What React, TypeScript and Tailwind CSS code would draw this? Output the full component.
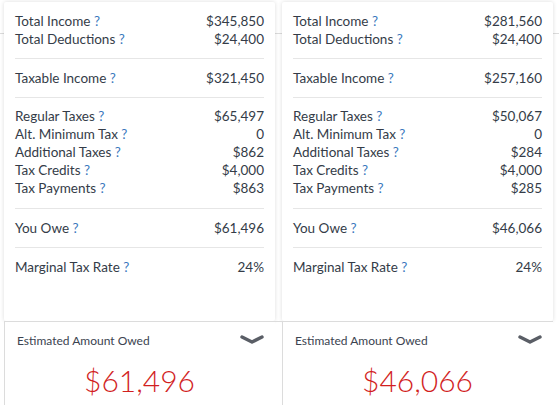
import React from "react";

// Tax comparison: two scenario cards side by side

interface Row {
  label: string;
  value: string;
}

interface Scenario {
  top: Row[];
  taxable: string;
  taxes: Row[];
  owe: string;
  rate: string;
}

const scenarios: Scenario[] = [
  {
    top: [
      { label: "Total Income", value: "$345,850" },
      { label: "Total Deductions", value: "$24,400" },
    ],
    taxable: "$321,450",
    taxes: [
      { label: "Regular Taxes", value: "$65,497" },
      { label: "Alt. Minimum Tax", value: "0" },
      { label: "Additional Taxes", value: "$862" },
      { label: "Tax Credits", value: "$4,000" },
      { label: "Tax Payments", value: "$863" },
    ],
    owe: "$61,496",
    rate: "24%",
  },
  {
    top: [
      { label: "Total Income", value: "$281,560" },
      { label: "Total Deductions", value: "$24,400" },
    ],
    taxable: "$257,160",
    taxes: [
      { label: "Regular Taxes", value: "$50,067" },
      { label: "Alt. Minimum Tax", value: "0" },
      { label: "Additional Taxes", value: "$284" },
      { label: "Tax Credits", value: "$4,000" },
      { label: "Tax Payments", value: "$285" },
    ],
    owe: "$46,066",
    rate: "24%",
  },
];

function Line({ label, value }: Row) {
  return (
    <div className="flex items-center justify-between h-[18px]">
      <span>
        {label} <span className="text-[#3a78bd]">?</span>
      </span>
      <span>{value}</span>
    </div>
  );
}

function Card({ s }: { s: Scenario }) {
  return (
    <div className="flex-1 flex flex-col">
      <div className="h-[319px] bg-white rounded-[2px] shadow-[0_0_4px_rgba(0,0,0,0.14)] px-[11px]">
        <div className="py-[10px] border-b border-[#e6e6e6]">
          {s.top.map((r) => (
            <Line key={r.label} {...r} />
          ))}
        </div>
        <div className="py-[10px] border-b border-[#e6e6e6]">
          <Line label="Taxable Income" value={s.taxable} />
        </div>
        <div className="pt-[9px] pb-[11px] border-b border-[#e6e6e6]">
          {s.taxes.map((r) => (
            <Line key={r.label} {...r} />
          ))}
        </div>
        <div className="py-[10px] border-b border-[#e6e6e6]">
          <Line label="You Owe" value={s.owe} />
        </div>
        <div className="py-[10px]">
          <Line label="Marginal Tax Rate" value={s.rate} />
        </div>
      </div>
      <div className="border-l border-[#dcdcdc] bg-white h-[90px] pl-[12px] pr-[10px]">
        <div className="flex items-center justify-between pt-[11px]">
          <span className="text-[12px] text-[#3b4350]">Estimated Amount Owed</span>
          <svg width="24" height="12" viewBox="0 0 24 12" className="mr-[1px] -mt-[3px]">
            <path d="M2 3 L12 8 L22 3" fill="none" stroke="#5a5e66" strokeWidth="3.4" strokeLinecap="round" strokeLinejoin="round" />
          </svg>
        </div>
        <div className="text-center text-[30px] font-light leading-none text-[#d21f1f] mt-[15px] pr-[3px]">{s.owe}</div>
      </div>
    </div>
  );
}

export default function App() {
  return (
    <div className="relative w-[559px] h-[405px] overflow-hidden bg-white font-['Lato',sans-serif] text-[13.5px] text-[#343c48]">
      <div className="absolute left-0 right-0 top-[33px] h-px bg-[#dcdcdc]" />
      <div className="absolute left-[4px] right-[6px] top-[321px] h-px bg-[#dcdcdc] z-10" />
      <div className="relative flex gap-[7px] pl-[4px] pr-[6px] pt-[2px]">
        {scenarios.map((s, i) => (
          <Card key={i} s={s} />
        ))}
      </div>
    </div>
  );
}
